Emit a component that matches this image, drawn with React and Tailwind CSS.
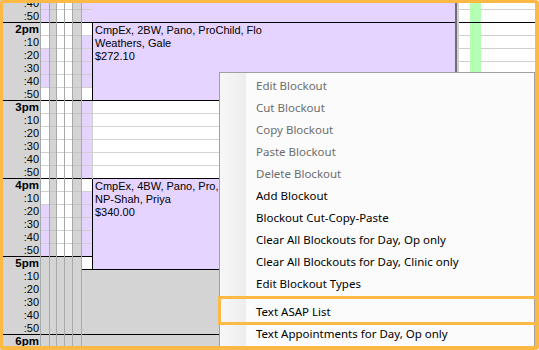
import React from 'react';

// 28 ten-minute rows, starting at 1:40pm
const rows = Array.from({ length: 28 }, (_, i) => {
  const total = 40 + i * 10;
  return { h: 1 + Math.floor(total / 60), m: total % 60 };
});

const cellBg = { L: 'bg-[#e5d4ff]', W: 'bg-white', G: 'bg-[#d4d4d4]' };

const colA = 'LLWWLLLWWWWWWWWWLLLLGGGGGGGG';
const colB = 'GGGGGGGGGGGGGGGGGGGGGGGGGGGG';
const colC = 'WWWWWWWWWWWWWWWWWWWWGGGGGGGG';
const colE = 'GGGGGGGGGGGGGGGGGGGGGGGGGGGG';
const colF = 'LLWLLLLWLLLLLLWLLLLLWGGGGGGG';

const menuItems = [
  { label: 'Edit Blockout', disabled: true },
  { label: 'Cut Blockout', disabled: true },
  { label: 'Copy Blockout', disabled: true },
  { label: 'Paste Blockout', disabled: true },
  { label: 'Delete Blockout', disabled: true },
  { label: 'Add Blockout' },
  { label: 'Blockout Cut-Copy-Paste' },
  { label: 'Clear All Blockouts for Day, Op only' },
  { label: 'Clear All Blockouts for Day, Clinic only' },
  { label: 'Edit Blockout Types' },
  { sep: true },
  { label: 'Text ASAP List' },
  { label: 'Text Appointments for Day, Op only' },
  { label: 'Text Appointments for Day, Clinic only' },
];

const GridCol = ({ pattern, width, border = 'border-r', blackRows = [] }) => (
  <div className={`flex flex-col shrink-0 border-[#a9a9a9] ${border} ${width}`}>
    {rows.map((r, i) => {
      const c = pattern[i];
      let line = 'border-b-[#cfcfcf]';
      if (r.m === 50 || blackRows.includes(i)) line = 'border-b-black';
      else if (c === 'G' && i >= 20) line = 'border-b-[#d4d4d4]';
      else if (c === 'G') line = 'border-b-[#c4c4c4]';
      return <div key={i} className={`h-[13px] border-b ${cellBg[c]} ${line}`} />;
    })}
  </div>
);

const TimeCol = () => (
  <div className="flex flex-col shrink-0 w-[41px] bg-[#d4d4d4] border-r border-[#a9a9a9]">
    {rows.map((r, i) => (
      <div
        key={i}
        className={`h-[13px] border-b text-right pr-[1px] text-[11px] leading-[13px] text-black ${r.m === 50 ? 'border-b-black' : 'border-b-[#d4d4d4]'}`}
      >
        {r.m === 0 ? <span className="font-bold text-[11.5px]">{r.h}pm</span> : `:${r.m}`}
      </div>
    ))}
  </div>
);

const Appt = ({ lines, height }) => (
  <div className={`bg-[#e5d4ff] border-l border-b border-black pl-[2px] pt-[1px] text-[11px] leading-[13px] text-black whitespace-nowrap overflow-hidden ${height}`}>
    {lines.map((l) => (
      <div key={l}>{l}</div>
    ))}
  </div>
);

const MainOp = () => (
  <div className="flex flex-col shrink-0 w-[363px]">
    <div className="h-[26px] bg-[#e5d4ff] border-b border-black" />
    <Appt height="h-[78px]" lines={['CmpEx, 2BW, Pano, ProChild, Flo', 'Weathers, Gale', '$272.10']} />
    <div className="flex flex-col border-l border-[#cfcfcf]">
      {[0, 1, 2, 3, 4, 5].map((i) => (
        <div key={i} className={`h-[13px] border-b bg-white ${i === 5 ? 'border-b-black' : 'border-b-[#d4d4d4]'}`} />
      ))}
    </div>
    <Appt height="h-[91px]" lines={['CmpEx, 4BW, Pano, Pro, Flo', 'NP-Shah, Priya', '$340.00']} />
    <div className="h-[65px] bg-[#d4d4d4] border-b border-black" />
    <div className="h-[26px] bg-[#d4d4d4]" />
  </div>
);

const RightOp = () => (
  <div className="flex flex-1">
    <div className="w-[2px] bg-[#6e6e76]" />
    <div className="w-[2px] bg-[#d0d0d0]" />
    <div className="w-[11px] flex flex-col">
      {rows.map((r, i) => (
        <div key={i} className={`h-[13px] border-b bg-white ${r.m === 50 ? 'border-b-black' : 'border-b-[#d0d0d0]'}`} />
      ))}
    </div>
    <div className="w-[11px] flex flex-col">
      {rows.map((r, i) => (
        <div key={i} className={`h-[13px] border-b bg-[#b4ffb4] ${r.m === 50 ? 'border-b-black' : 'border-b-[#b4ffb4]'}`} />
      ))}
    </div>
    <div className="flex-1 flex flex-col">
      {rows.map((r, i) => (
        <div key={i} className={`h-[13px] border-b bg-white ${r.m === 50 ? 'border-b-black' : 'border-b-[#d0d0d0]'}`} />
      ))}
    </div>
  </div>
);

const ContextMenu = () => (
  <div className="absolute left-[219px] top-[72px] w-[316px] h-[300px] border border-[#a0a0a0] bg-[#fbfbfb] py-[2px] font-['Noto_Sans',sans-serif]">
    <div className="absolute left-0 top-0 bottom-0 w-[26px] bg-gradient-to-r from-[#f7f7f7] to-[#ededed]" />
    {menuItems.map((it, i) =>
      it.sep ? (
        <div key={i} className="h-[6px] flex items-center pl-[30px]">
          <div className="h-px w-full bg-[#d7d7d7]" />
        </div>
      ) : (
        <div
          key={i}
          className={`relative h-[22px] leading-[22px] pl-[36px] text-[11.5px] whitespace-nowrap ${it.disabled ? 'text-[#6d6d6d]' : 'text-black'}`}
        >
          {it.label}
        </div>
      )
    )}
  </div>
);

export default function App() {
  return (
    <div className="relative w-[539px] h-[350px] overflow-hidden bg-white font-['Liberation_Sans',Arial,sans-serif]">
      <div className="flex mt-[-3px]">
        <TimeCol />
        <GridCol pattern={colA} width="w-[9px]" />
        <GridCol pattern={colB} width="w-[7px]" />
        <GridCol pattern={colC} width="w-[8px]" />
        <GridCol pattern={colC} width="w-[8px]" />
        <GridCol pattern={colE} width="w-[9px]" />
        <GridCol pattern={colF} width="w-[10px]" border="border-r-0" blackRows={[20]} />
        <MainOp />
        <RightOp />
      </div>

      <ContextMenu />

      {/* highlight boxes drawn over the screenshot */}
      <div className="absolute left-[218px] top-[296px] right-0 h-[29px] border-[3px] border-[#fdb945] pointer-events-none" />
      <div className="absolute inset-0 border-t-[3px] border-l-[3px] border-r-4 border-b-4 border-[#fdb945] rounded-[3px] pointer-events-none" />
    </div>
  );
}
